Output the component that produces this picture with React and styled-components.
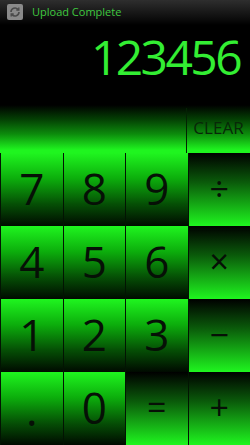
import React from "react";
import styled, { createGlobalStyle } from "styled-components";

const Global = createGlobalStyle`
  html, body { margin: 0; padding: 0; background: #000; }
  body { font-family: "Open Sans", "Noto Sans", sans-serif; }
`;

const GREEN = "#1ff51f";
const DARK = "#000a00";

const Screen = styled.div`
  width: 250px;
  height: 445px;
  display: flex;
  flex-direction: column;
  background: #000;
  overflow: hidden;
`;

const StatusBar = styled.div`
  height: 25px;
  display: flex;
  align-items: center;
  gap: 9px;
  padding: 0 0 2px 7px;
  box-sizing: border-box;
  background: linear-gradient(#2e2e2e, #0a0a0a 80%, #000);
`;

const StatusText = styled.span`
  color: #3fc93f;
  font-size: 11px;
  font-family: "Open Sans", sans-serif;
`;

const Display = styled.div`
  height: 80px;
  display: flex;
  justify-content: flex-end;
  align-items: flex-start;
  padding: 8px 10px 0 0;
  box-sizing: border-box;
`;

const Number = styled.div`
  color: #33ee33;
  font-family: "Open Sans", sans-serif;
  font-size: 48px;
  line-height: 1;
  letter-spacing: -2.6px;
`;

const TopRow = styled.div`
  height: 48px;
  display: grid;
  grid-template-columns: 186px 1fr;
  background: linear-gradient(#000 0%, #044004 30%, #0c8a0c 60%, ${GREEN} 94%);
`;

const ClearKey = styled.div`
  border-left: 1px solid #032203;
  margin-top: 3px;
  display: flex;
  align-items: center;
  justify-content: center;
  padding-bottom: 7px;
  color: #082808;
  font-family: "Open Sans", sans-serif;
  font-size: 17px;
`;

const Pad = styled.div`
  flex: 1;
  display: grid;
  grid-template-columns: repeat(4, 1fr);
  grid-template-rows: repeat(4, 1fr);
`;

const Key = styled.div`
  display: flex;
  align-items: ${(p) => (p.$low ? "flex-end" : "center")};
  justify-content: center;
  padding-bottom: ${(p) => (p.$low ? "14px" : "4px")};
  box-sizing: border-box;
  border-left: 1px solid #021402;
  color: #061006;
  font-family: "Open Sans", sans-serif;
  font-size: ${(p) => (p.$op ? "34px" : "44px")};
  line-height: 1;
  background: ${(p) =>
    p.$op
      ? `linear-gradient(#000 0%, #0a5a0a 40%, ${GREEN} 100%)`
      : `linear-gradient(${GREEN} 0%, #0cae0c 35%, #054f05 70%, ${DARK} 100%)`};
`;

const StatusIcon = () => (
  <svg width="16" height="16" viewBox="0 0 16 16">
    <rect x="0" y="0" width="16" height="16" rx="2" fill="#8a8a8a" />
    <path d="M4 8a4 4 0 0 1 7-2.6" fill="none" stroke="#4a4a4a" strokeWidth="1.6" />
    <path d="M12 8a4 4 0 0 1-7 2.6" fill="none" stroke="#4a4a4a" strokeWidth="1.6" />
    <path d="M11.8 3.5v2.5h-2.5" fill="none" stroke="#4a4a4a" strokeWidth="1.4" />
    <path d="M4.2 12.5v-2.5h2.5" fill="none" stroke="#4a4a4a" strokeWidth="1.4" />
  </svg>
);

const keys = [
  ["7"], ["8"], ["9"], ["÷", "op"],
  ["4"], ["5"], ["6"], ["×", "op"],
  ["1"], ["2"], ["3"], ["−", "op"],
  [".", "low"], ["0"], ["=", "op"], ["+", "op"],
];

export default function App() {
  return (
    <>
      <Global />
      <Screen>
        <StatusBar>
          <StatusIcon />
          <StatusText>Upload Complete</StatusText>
        </StatusBar>
        <Display>
          <Number>123456</Number>
        </Display>
        <TopRow>
          <div />
          <ClearKey>CLEAR</ClearKey>
        </TopRow>
        <Pad>
          {keys.map(([label, kind], i) => (
            <Key key={i} $op={kind === "op"} $low={kind === "low"}>
              {label}
            </Key>
          ))}
        </Pad>
      </Screen>
    </>
  );
}
